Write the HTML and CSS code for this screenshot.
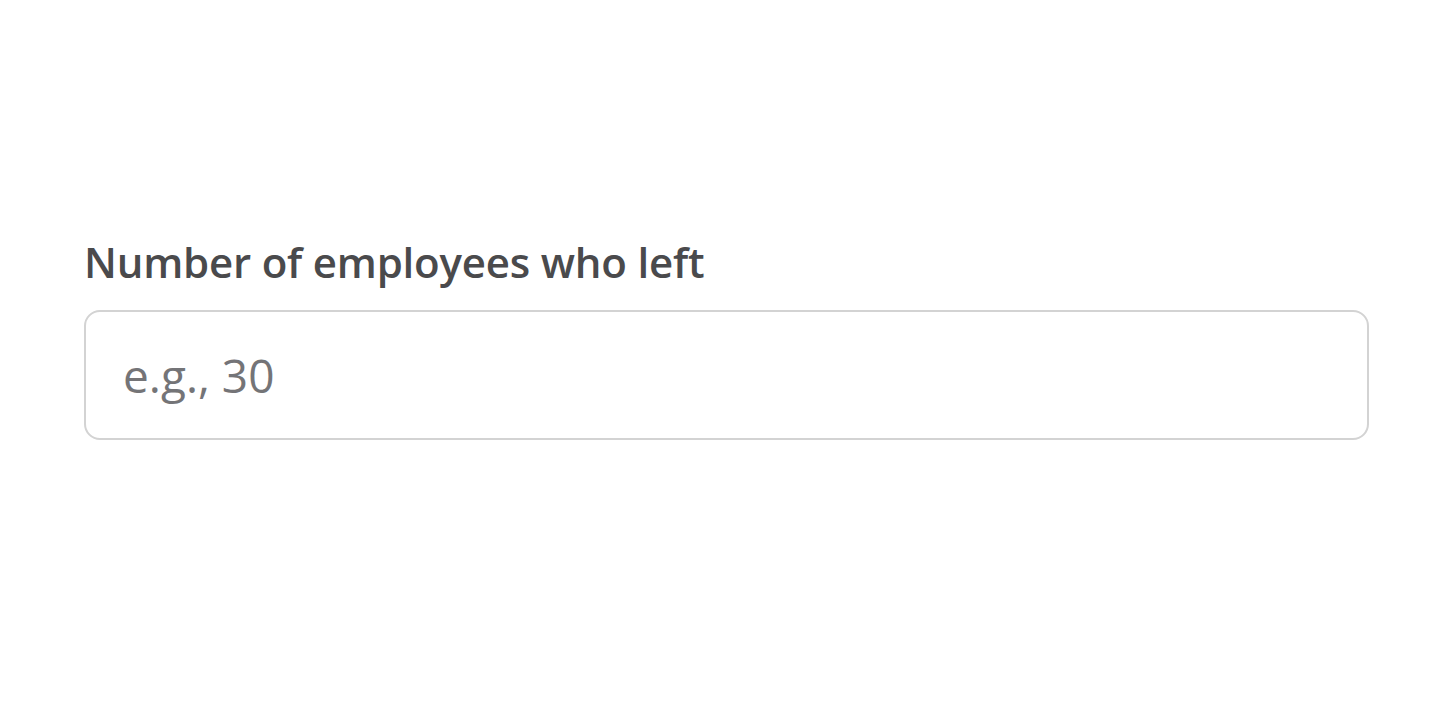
FILE: index.html
```html
<!DOCTYPE html>
<html lang="en">
<head>
<meta charset="utf-8">
<title>Form</title>
<link rel="stylesheet" href="styles.css">
</head>
<body>
<main class="page">
  <div class="field">
    <label class="label" for="left">Number of employees who left</label>
    <input class="input" id="left" type="text" placeholder="e.g., 30">
  </div>
</main>
</body>
</html>
```
FILE: styles.css
```css
html, body {
  margin: 0;
  padding: 0;
  background: #ffffff;
}
.page {
  padding: 237px 81px 0 84px;
  font-family: "Open Sans", "Noto Sans", sans-serif;
}
.field {
  display: flex;
  flex-direction: column;
  gap: 23px;
}
.label {
  font-size: 42px;
  font-weight: 600;
  color: #4a4a4c;
  line-height: 50px;
  letter-spacing: -0.2px;
}
.input {
  box-sizing: border-box;
  width: 100%;
  height: 130px;
  border: 2px solid #d3d3d3;
  border-radius: 16px;
  padding: 0 37px;
  font-family: "Open Sans", "Noto Sans", sans-serif;
  font-size: 46px;
  color: #333;
  background: #fff;
  outline: none;
}
.input::placeholder {
  color: #747477;
}
```
